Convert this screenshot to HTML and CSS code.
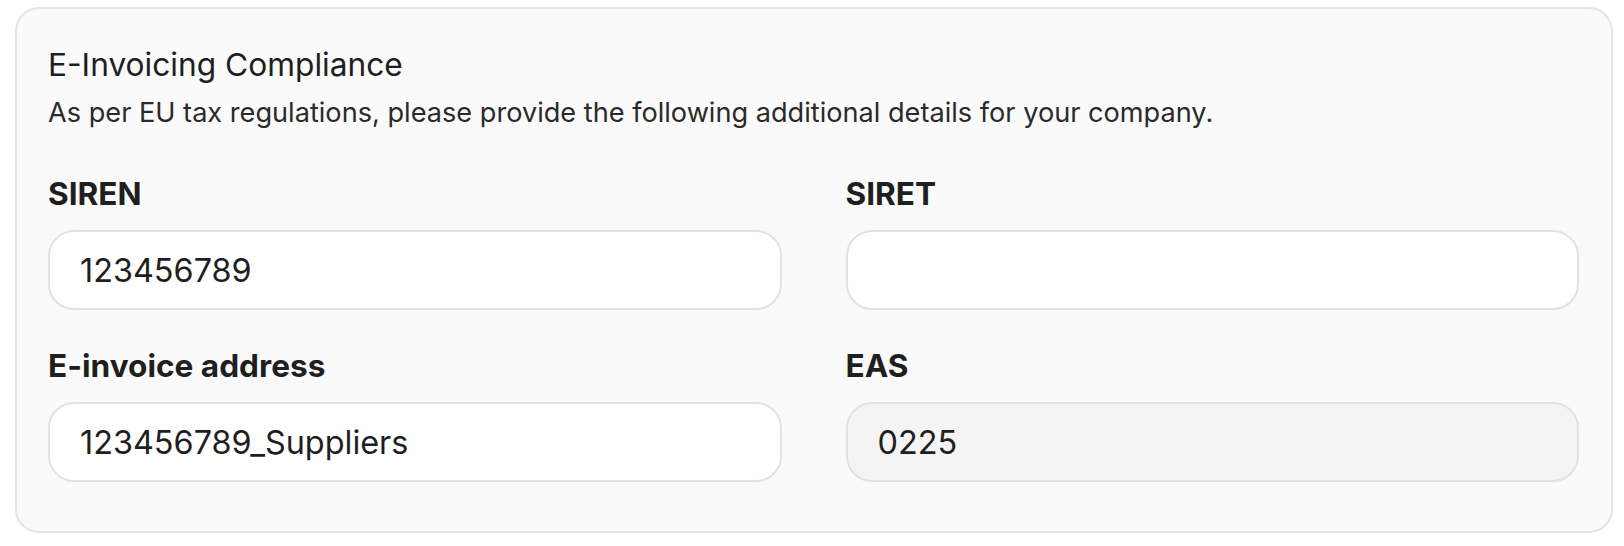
FILE: index.html
```html
<!DOCTYPE html>
<html lang="en">
<head>
<meta charset="utf-8">
<title>E-Invoicing Compliance</title>
<link rel="stylesheet" href="styles.css">
</head>
<body>
<div class="page">
  <section class="card">
    <h2 class="card-title">E-Invoicing Compliance</h2>
    <p class="card-desc">As per EU tax regulations, please provide the following additional details for your company.</p>
    <div class="fields">
      <div class="field">
        <label class="field-label" for="siren">SIREN</label>
        <input class="field-input" id="siren" type="text" value="123456789">
      </div>
      <div class="field">
        <label class="field-label" for="siret">SIRET</label>
        <input class="field-input" id="siret" type="text" value="">
      </div>
      <div class="field">
        <label class="field-label" for="einv">E-invoice address</label>
        <input class="field-input" id="einv" type="text" value="123456789_Suppliers">
      </div>
      <div class="field">
        <label class="field-label" for="eas">EAS</label>
        <input class="field-input is-disabled" id="eas" type="text" value="0225" disabled>
      </div>
    </div>
  </section>
</div>
</body>
</html>
```

FILE: styles.css
```css
* {
  box-sizing: border-box;
}

html, body {
  margin: 0;
  padding: 0;
  background: #ffffff;
}

body {
  font-family: Inter, "Noto Sans", sans-serif;
  color: #1f1f1f;
}

.page {
  padding: 7px 11px 0 15px;
}

.card {
  background: #fafafa;
  border: 2px solid #e4e4e4;
  border-radius: 24px;
  padding: 32px 32px 49px 31px;
}

.card-title {
  margin: 0;
  font-size: 31.7px;
  line-height: 48px;
  font-weight: 400;
  color: #1f1f1f;
}

.card-desc {
  margin: 8px 0 0;
  font-size: 27.15px;
  line-height: 32px;
  color: #2a2a2a;
}

.fields {
  display: grid;
  grid-template-columns: 1fr 1fr;
  column-gap: 64px;
  row-gap: 32px;
  margin-top: 41px;
}

.field {
  display: flex;
  flex-direction: column;
  gap: 12px;
}

.field-label {
  font-size: 31.6px;
  line-height: 48px;
  font-weight: 700;
  color: #1f1f1f;
}

.field-input {
  height: 80px;
  width: 100%;
  border: 2px solid #e2e2e2;
  border-radius: 26px;
  background: #ffffff;
  padding: 0 28px 0 30px;
  font-family: Inter, "Noto Sans", sans-serif;
  font-size: 32.4px;
  color: #1f1f1f;
  outline: none;
}

.field-input.is-disabled {
  background: #f4f4f4;
  color: #1f1f1f;
  -webkit-text-fill-color: #1f1f1f;
  opacity: 1;
}
```
